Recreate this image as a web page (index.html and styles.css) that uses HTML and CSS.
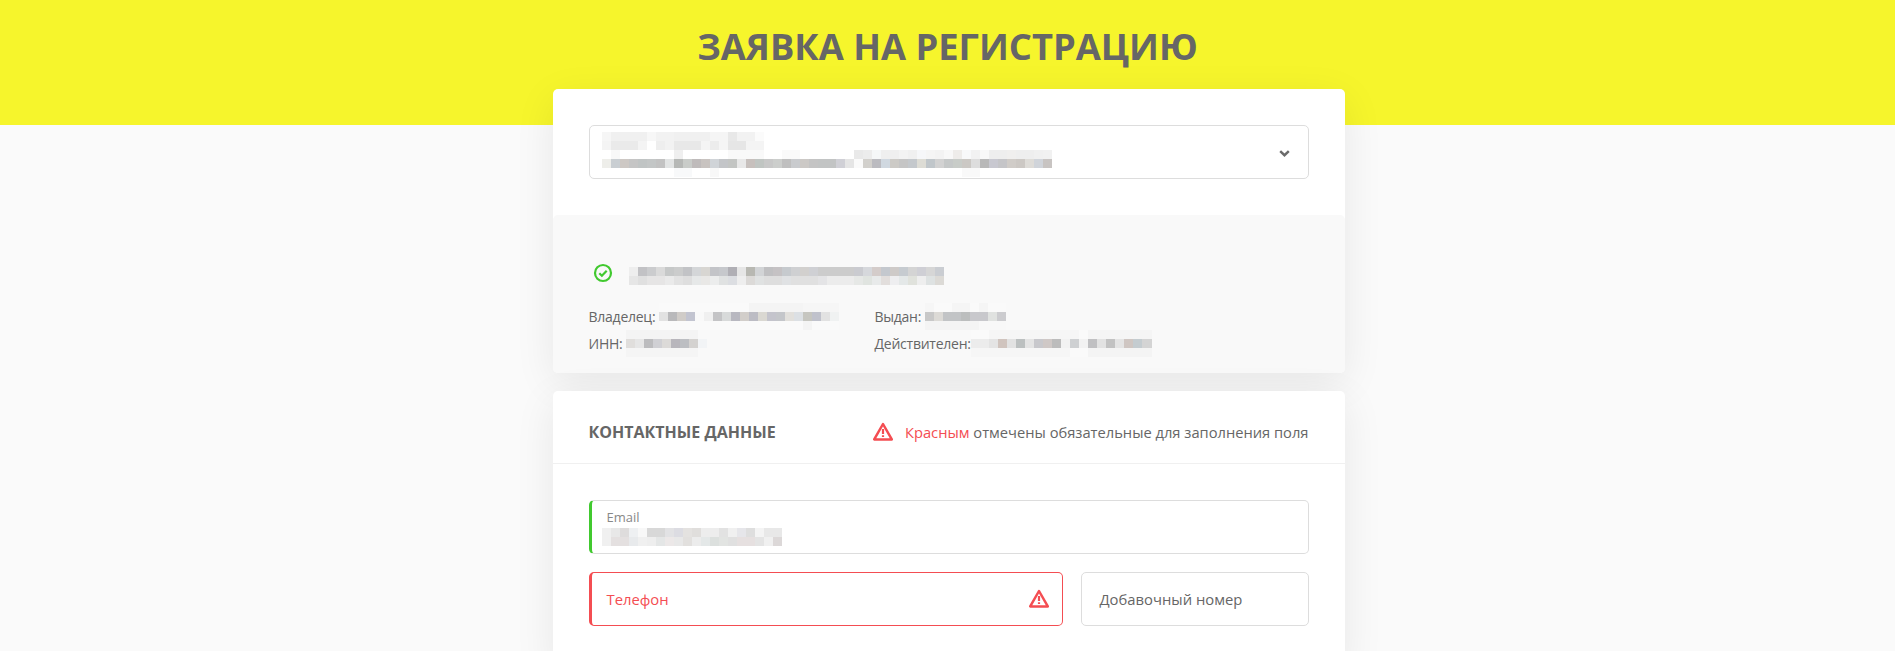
FILE: index.html
```html
<!DOCTYPE html>
<html lang="ru">
<head>
    <meta charset="UTF-8">
    <meta name="viewport" content="width=device-width, initial-scale=1.0">
    <title>Заявка на регистрацию</title>
    <link rel="stylesheet" href="styles.css">
</head>
<body>
    <header class="banner">
        <h1>ЗАЯВКА НА РЕГИСТРАЦИЮ</h1>
    </header>

    <main class="page">
        <section class="card">
            <div class="cert-select">
                <div class="select">
                    <div class="mosaic mosaic-select"></div>
                    <svg class="chevron" width="11" height="7" viewBox="0 0 11 7"><path d="M1.2 1.2 5.5 5.2 9.8 1.2" fill="none" stroke="#6b6b6b" stroke-width="2.5"/></svg>
                </div>
            </div>
            <div class="cert-info">
                <div class="cert-name">
                    <svg width="20" height="20" viewBox="0 0 20 20"><circle cx="10" cy="10" r="8" fill="none" stroke="#41c92f" stroke-width="2.2"/><path d="M6.3 10.2 8.9 12.8 13.7 7.8" fill="none" stroke="#41c92f" stroke-width="2.2"/></svg>
                    <div class="mosaic mosaic-name"></div>
                </div>
                <div class="cert-grid">
                    <div class="cert-row">Владелец: <div class="mosaic mosaic-owner"></div></div>
                    <div class="cert-row">Выдан: <div class="mosaic mosaic-issued"></div></div>
                    <div class="cert-row">ИНН: <div class="mosaic mosaic-inn"></div></div>
                    <div class="cert-row">Действителен:<div class="mosaic mosaic-valid"></div></div>
                </div>
            </div>
        </section>

        <section class="card">
            <div class="card-head">
                <h2>КОНТАКТНЫЕ ДАННЫЕ</h2>
                <p class="hint">
                    <svg width="20" height="20" viewBox="0 0 20 20"><path d="M10 2 18.8 17.4H1.2z" fill="none" stroke="#f44d52" stroke-width="2.5" stroke-linejoin="round"/><path d="M10 7v5M10 13.3v1.7" fill="none" stroke="#f44d52" stroke-width="2.2"/></svg>
                    <span><span class="red">Красным</span> отмечены обязательные для заполнения поля</span>
                </p>
            </div>
            <div class="card-body">
                <div class="field field-ok">
                    <label>Email</label>
                    <div class="mosaic mosaic-email"></div>
                </div>
                <div class="field-line">
                    <div class="field field-error">
                        <label>Телефон</label>
                        <svg width="20" height="20" viewBox="0 0 20 20"><path d="M10 2 18.8 17.4H1.2z" fill="none" stroke="#f44d52" stroke-width="2.5" stroke-linejoin="round"/><path d="M10 7v5M10 13.3v1.7" fill="none" stroke="#f44d52" stroke-width="2.2"/></svg>
                    </div>
                    <div class="field field-ext">
                        <label>Добавочный номер</label>
                    </div>
                </div>
            </div>
        </section>
    </main>
</body>
</html>
```

FILE: styles.css
```css
* {
    box-sizing: border-box;
}

body {
    margin: 0;
    font-family: "Open Sans", sans-serif;
    font-size: 14px;
    color: #666;
    background-color: #fafafa;
}

.banner {
    height: 125px;
    padding-top: 24px;
    background-color: #f6f52c;
    text-align: center;
}

h1 {
    margin: 0;
    font-size: 36.3px;
    line-height: 44px;
    font-weight: 700;
    color: #666;
}

.page {
    width: 792px;
    margin: -36px auto 0;
    transform: translateX(1px);
}

.card {
    margin-bottom: 18px;
    background-color: #fff;
    border-radius: 5px;
    box-shadow: 0 10px 40px rgba(0, 0, 0, 0.08);
}

.cert-select {
    padding: 36px;
}

.select {
    display: flex;
    justify-content: space-between;
    height: 54px;
    padding: 6px 18px 0 12px;
    border: 1px solid #ddd;
    border-radius: 5px;
}

.chevron {
    margin-top: 18px;
}

.cert-info {
    padding: 48px 36px 16px;
    background-color: #f9f9f9;
    border-radius: 5px;
}

.cert-name {
    display: flex;
    gap: 16px;
    margin-left: 4px;
}

.cert-grid {
    display: grid;
    grid-template-columns: 286px 1fr;
    margin-top: 18px;
    letter-spacing: -0.25px;
}

.cert-row {
    display: flex;
    align-items: center;
    gap: 4px;
    height: 27px;
}

.card-head {
    display: flex;
    align-items: center;
    justify-content: space-between;
    height: 73px;
    padding: 10px 36px 0;
    border-bottom: 1px solid #f0f0f0;
}

h2 {
    margin: 0;
    font-size: 16px;
    font-weight: 700;
    color: #666;
}

.hint {
    display: flex;
    align-items: center;
    gap: 12px;
    margin: 0;
    font-size: 14.7px;
}

.red {
    color: #f44d52;
}

.card-body {
    padding: 36px 36px 40px;
}

.field {
    height: 54px;
    border: 1px solid #ddd;
    border-radius: 5px;
    padding: 0 13px 0 18px;
    font-size: 14.8px;
}

.field-ok {
    padding-top: 8px;
    border-left: 3px solid #41c92f;
    padding-left: 15px;
}

.field-ok label {
    display: block;
    font-size: 13px;
    line-height: 16px;
    color: #888;
}

.field-line {
    display: flex;
    gap: 18px;
    margin-top: 18px;
}

.field-error {
    display: flex;
    align-items: center;
    justify-content: space-between;
    width: 474px;
    border-color: #f44d52;
    border-left-width: 3px;
    padding-left: 15px;
    color: #f44d52;
}

.field-ext {
    display: flex;
    align-items: center;
    flex: 1;
}

/* замазанные данные */
.mosaic {
    flex: none;
    background-repeat: no-repeat;
}

.mosaic-select {
    width: 450px;
    height: 45px;
    background-image:
        linear-gradient(90deg, #f6f6f6 9px, #f0f0f0 9px 45px, #f7f7f7 45px 54px, #f2f2f2 54px 72px, #f0f0f0 72px 108px, #f5f5f5 108px 126px, #e8e8e8 126px 135px, #f2f2f2 135px 153px, #fbfbfb 153px 162px, #fff 162px),
        linear-gradient(90deg, #f4f4f4 9px, #eaeaea 9px 36px, #f4f4f4 36px 45px, #fff 45px 54px, #eee 54px 63px, #f2f2f2 63px 72px, #e8e8e8 72px 99px, #f4f4f4 99px 108px, #ececec 108px 117px, #f5f5f5 117px 126px, #e6e6e6 126px 144px, #f4f4f4 144px 162px, #fff 162px),
        linear-gradient(90deg, #fff 9px, #f8f8f8 9px 18px, #fff 18px 72px, #efefef 72px 81px, #fff 81px 126px, #f9f9f9 126px 162px, #fff 162px 180px, #fafafa 180px 198px, #fff 198px 252px, #e9e9e9 252px 261px, #ececec 261px 270px, #f5f7f8 270px 279px, #efefef 279px 297px, #f3f3f3 297px 306px, #f0f0f0 306px 315px, #f6f7f9 315px 324px, #f5f5f5 324px 333px, #f3f3f3 333px 342px, #f8f8f8 342px 351px, #eeecea 351px 360px, #f8f9fa 360px 369px, #f2f2f2 369px 378px, #f8f8f8 378px 387px, #eee 387px 405px, #f0efee 405px 414px, #eee 414px 432px, #f0f0f0 432px 441px, #f1f1f1 441px 450px),
        linear-gradient(90deg, #eeeeea 9px, #c9ced2 9px 18px, #cdc8c4 18px 27px, #c5c5c5 27px 36px, #c0c4c4 36px 45px, #c3c6c6 45px 54px, #c2c2c2 54px 63px, #e2e4e4 63px 72px, #b6b8b6 72px 81px, #c9ccc9 81px 90px, #bfbbbb 90px 99px, #c8c3c0 99px 108px, #d0d4d8 108px 117px, #c3c5c8 117px 126px, #c3c5c3 126px 135px, #e8e8e8 135px 144px, #c7c0bd 144px 153px, #c0c5c2 153px 162px, #c8c8c8 162px 171px, #cccecc 171px 180px, #bfbfbf 180px 189px, #c9cbce 189px 198px, #ccc9c6 198px 207px, #c4c4c4 207px 216px, #c2c4c4 216px 234px, #d0d0d6 234px 243px, #e5e5e5 243px 252px, #fafafa 252px 261px, #d2d0cc 261px 270px, #bbbbc0 270px 279px, #d0d8e0 279px 288px, #cccac6 288px 297px, #c5c5c5 297px 306px, #c4c8cc 306px 315px, #dddcd5 315px 324px, #c0c6ca 324px 333px, #d2d2d2 333px 342px, #c5c8c8 342px 351px, #c8ccc8 351px 360px, #cbc8c4 360px 369px, #dddddd 369px 378px, #b8b8b8 378px 387px, #c8c8d0 387px 396px, #c5c5c8 396px 405px, #d0ccc8 405px 414px, #ccc8c4 414px 423px, #dedcd8 423px 432px, #d0d4da 432px 441px, #c8c4c2 441px 450px),
        linear-gradient(90deg, #fff 72px, #f8f9fa 72px 90px, #fff 90px 108px, #f8f8f8 108px 117px, #fff 117px 360px, #f9f9f9 360px 378px, #fff 378px);
    background-size: 100% 9px;
    background-position: 0 0, 0 9px, 0 18px, 0 27px, 0 36px;
}

.mosaic-name {
    width: 315px;
    height: 18px;
    margin-top: 4px;
    background-image:
        linear-gradient(90deg, #eee 9px, #c2c2c5 9px 18px, #cbccce 18px 27px, #dadada 27px 36px, #c6c8c8 36px 45px, #cbcccc 45px 54px, #c2c3c6 54px 63px, #d4d6d8 63px 72px, #d8d6d2 72px 81px, #c3c4c8 81px 90px, #c6c8cc 90px 99px, #b0afb5 99px 108px, #e6e6e6 108px 117px, #b8b8b2 117px 126px, #d2d4d6 126px 135px, #c0c0c2 135px 144px, #c5c2c4 144px 153px, #c6cace 153px 162px, #cfd0d2 162px 171px, #d2d0ce 171px 180px, #cfd0d4 180px 189px, #ccc 189px 225px, #cacbd0 225px 234px, #d6d8dc 234px 243px, #d4ccca 243px 252px, #c4c8ce 252px 261px, #cecac8 261px 270px, #c6cbd0 270px 279px, #d4d4d4 279px 288px, #cfcfd5 288px 297px, #d6d6d6 297px 306px, #cacdd2 306px),
        linear-gradient(90deg, #e6e6e6 9px, #e0e0e0 9px 18px, #e6e5e5 18px 36px, #eaeaea 36px 45px, #e2e2e2 45px 54px, #dedede 54px 63px, #e6e8e8 63px 72px, #e9e8e6 72px 81px, #eceded 81px 90px, #e0e2e2 90px 99px, #dcdee2 99px 108px, #eee 108px 117px, #dcdad8 117px 126px, #e0e2e2 126px 135px, #dedede 135px 153px, #e0e2e4 153px 162px, #e0e0e0 162px 189px, #e4e4e6 189px 198px, #ececec 198px 225px, #e6e8e6 225px 234px, #e0e4e0 234px 243px, #e8eaea 243px 252px, #e2dedc 252px 261px, #eeeef0 261px 270px, #e4e8e8 270px 279px, #e0e2dc 279px 288px, #eee 288px 297px, #dee2e2 297px 306px, #dcdad6 306px);
    background-size: 100% 9px;
    background-position: 0 0, 0 9px;
}

.mosaic-owner {
    width: 180px;
    height: 27px;
    background-image:
        linear-gradient(90deg, #fafafa 90px, #f4f4f4 90px 144px, #f6f6f6 144px),
        linear-gradient(90deg, #e2e2e2 9px, #b9b9bb 9px 18px, #d0ccc8 18px 27px, #c2c4d0 27px 36px, #f9f9f9 36px 45px, #f0f0f0 45px 54px, #c4c4c6 54px 63px, #d8dada 63px 72px, #b8b8c0 72px 81px, #d2ceca 81px 90px, #bcbcc4 90px 99px, #dad8d2 99px 108px, #c4c4cc 108px 117px, #c4c6ca 117px 126px, #e2e0dc 126px 135px, #dce0e4 135px 144px, #c6c6c0 144px 153px, #c0c2cc 153px 162px, #e2e2e2 162px 171px, #f0f2f2 171px),
        linear-gradient(90deg, #fafafa 144px, #f4f4f4 144px 153px, #fafafa 153px);
    background-size: 100% 9px;
    background-position: 0 0, 0 9px, 0 18px;
}

.mosaic-inn {
    width: 81px;
    height: 27px;
    background-image:
        linear-gradient(90deg, #f4f4f4 72px, #f9f9f9 72px),
        linear-gradient(90deg, #e0dedc 9px, #e6e6e6 9px 18px, #bcbcbe 18px 27px, #d0d0d4 27px 36px, #dcdad8 36px 45px, #b8b6bc 45px 54px, #bcbec2 54px 63px, #d4d2d0 63px 72px, #f2f4f6 72px),
        linear-gradient(90deg, #f5f5f5 72px, #f9f9f9 72px);
    background-size: 100% 9px;
    background-position: 0 0, 0 9px, 0 18px;
}

.mosaic-issued {
    width: 81px;
    height: 27px;
    background-image:
        linear-gradient(90deg, #f6f6f6 9px, #fafafa 9px 27px, #f5f5f5 27px 45px, #fafafa 45px 54px, #f5f5f5 54px 63px, #fafafa 63px),
        linear-gradient(90deg, #c8c8c8 9px, #dcdad6 9px 18px, #c2c4c6 18px 36px, #bcbebe 36px 45px, #c8c8cc 45px 63px, #e0e2e0 63px 72px, #cccccf 72px),
        linear-gradient(90deg, #f4f4f4 54px, #f8f8f8 54px);
    background-size: 100% 9px;
    background-position: 0 0, 0 9px, 0 18px;
}

.mosaic-valid {
    width: 181px;
    height: 27px;
    margin-left: -4px;
    background-image:
        linear-gradient(90deg, #fafafa 18px, #f6f6f6 18px 108px, #fafafa 108px 117px, #f5f5f5 117px),
        linear-gradient(90deg, #ececec 18px, #e4e4e4 18px 27px, #d0c4be 27px 36px, #e2e2e2 36px 45px, #bcc0c0 45px 54px, #e4e4e4 54px 63px, #c8c8cc 63px 72px, #cfc8c6 72px 81px, #bcbcbc 81px 90px, #f2f2f2 90px 99px, #ced0d2 99px 108px, #f2f2f2 108px 117px, #c0c0c2 117px 126px, #e2e2e2 126px 135px, #c2c2c2 135px 144px, #e4e4e4 144px 153px, #cfc6c2 153px 162px, #c4ccd0 162px 171px, #d4d4d4 171px),
        linear-gradient(90deg, #f6f6f6 99px, #fafafa 99px 117px, #f4f4f4 117px);
    background-size: 100% 9px;
    background-position: 0 0, 0 9px, 0 18px;
}

.mosaic-email {
    width: 180px;
    height: 18px;
    margin: 3px 0 0 -5px;
    background-image:
        linear-gradient(90deg, #f0f0f0 9px, #e8e8e8 9px 18px, #dedcdc 18px 27px, #eef0f2 27px 36px, #f8f8f8 36px 45px, #d8d8d8 45px 63px, #e2e2e4 63px 72px, #dcdce2 72px 81px, #e4e2e0 81px 90px, #e0dedc 90px 99px, #ededed 99px 117px, #e2e2e2 117px 126px, #f0f0f0 126px 135px, #e6e6ea 135px 144px, #dedede 144px 153px, #f4f4f4 153px 162px, #e8e8e8 162px 180px),
        linear-gradient(90deg, #f0f0f0 9px, #e4e0e0 9px 27px, #e8eaec 27px 36px, #f0f0f0 36px 45px, #eee 45px 54px, #e4e6e6 54px 63px, #ece8e8 63px 72px, #e8e8e8 72px 81px, #e2e0de 81px 90px, #ececec 90px 99px, #e4e8e8 99px 108px, #dce0de 108px 117px, #e2e4e2 117px 126px, #e0e0e0 126px 135px, #e6e0e0 135px 153px, #e4e4e4 153px 162px, #f0f0f0 162px 171px, #dcd8d8 171px);
    background-size: 100% 9px;
    background-position: 0 0, 0 9px;
}
```
